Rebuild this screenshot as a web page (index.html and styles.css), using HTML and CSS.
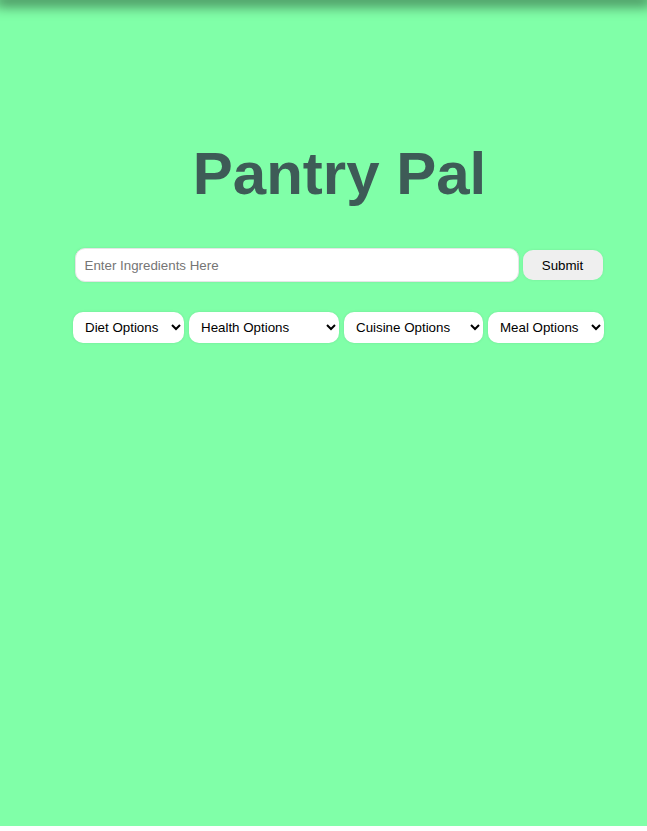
FILE: index.html
```html
<!DOCTYPE html>
<html>
<head>
<meta charset="utf-8">
<link rel="stylesheet" href="styles.css">
<title>Pantry Pal</title>
</head>
<body>
<div class="page">
  <div class="topbar"></div>
  <main class="main">
    <h1 class="title">Pantry Pal</h1>
    <form class="search">
      <input class="ingredients" type="text" placeholder="Enter Ingredients Here">
      <button class="submit" type="button">Submit</button>
    </form>
    <div class="filters">
      <select class="filter filter-diet"><option>Diet Options</option></select>
      <select class="filter filter-health"><option>Health Options</option></select>
      <select class="filter filter-cuisine"><option>Cuisine Options</option></select>
      <select class="filter filter-meal"><option>Meal Options</option></select>
    </div>
  </main>
</div>
</body>
</html>
```
FILE: styles.css
```css
html, body {
  margin: 0;
  padding: 0;
  background: #ffffff;
}
body {
  font-family: "Liberation Sans", Arial, sans-serif;
}
.page {
  height: 826px;
  background: #80ffa8;
  position: relative;
  overflow: hidden;
}
.topbar {
  height: 0;
  box-shadow: 0 0 14px 5px rgba(0, 0, 0, 0.6);
}
.main {
  padding-left: 30px;
  display: flex;
  flex-direction: column;
  align-items: center;
}
.title {
  margin: 139px 0 0 2px;
  font-size: 60px;
  font-weight: bold;
  color: #3e5b57;
  line-height: 69px;
}
.search {
  margin-top: 40px;
  display: flex;
  align-items: center;
  gap: 4px;
}
.ingredients {
  box-sizing: border-box;
  width: 444px;
  height: 34px;
  border: 1px solid #e6e6e6;
  border-radius: 10px;
  padding: 0 9px;
  font-family: "Liberation Sans", Arial, sans-serif;
  font-size: 13.33px;
  background: #fff;
  box-shadow: 0 0 3px rgba(0, 0, 0, 0.08);
  outline: none;
}
.ingredients::placeholder {
  color: #757575;
}
.submit {
  box-sizing: border-box;
  width: 80px;
  height: 30px;
  border: none;
  border-radius: 10px;
  background: #efefef;
  font-family: "Liberation Sans", Arial, sans-serif;
  font-size: 13.33px;
  color: #000;
  box-shadow: 0 0 3px rgba(0, 0, 0, 0.08);
}
.filters {
  margin-top: 30px;
  display: flex;
  gap: 5px;
}
.filter {
  box-sizing: border-box;
  height: 31px;
  border: none;
  border-radius: 10px;
  background-color: #fff;
  font-family: "Liberation Sans", Arial, sans-serif;
  font-size: 13.33px;
  color: #000;
  padding: 0 4px 0 8px;
  box-shadow: 0 0 3px rgba(0, 0, 0, 0.1);
}
.filter-diet { width: 111px; }
.filter-health { width: 150px; }
.filter-cuisine { width: 139px; }
.filter-meal { width: 116px; }
```
